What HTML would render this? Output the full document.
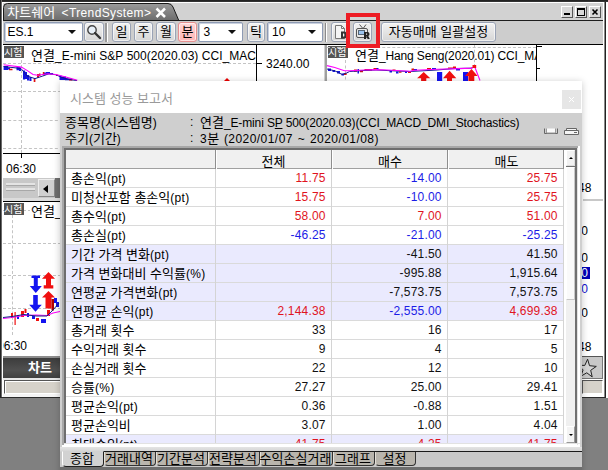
<!DOCTYPE html><html><head><meta charset="utf-8"><title>차트쉐어 TrendSystem</title><style>
html,body{margin:0;padding:0}
body{width:608px;height:470px;overflow:hidden;background:#808080;position:relative;font-family:"Liberation Sans","Noto Sans CJK KR",sans-serif;font-size:12px;color:#000}
.a{position:absolute}
.t{white-space:nowrap}
.k{font-size:13px;letter-spacing:normal}
.k2{font-size:10px;letter-spacing:normal}
</style></head><body><div class="a" style="left:0px;top:0px;width:608px;height:398px;background:#fff"></div>
<div class="a" style="left:0px;top:0px;width:608px;height:2px;background:linear-gradient(#1c1c1c,#3a3a3a)"></div>
<div class="a" style="left:0px;top:0px;width:1px;height:398px;background:#222"></div>
<div class="a" style="left:1px;top:0px;width:1px;height:398px;background:#6a6a6a"></div>
<div class="a" style="left:604px;top:2px;width:1px;height:396px;background:#8a8a8a"></div>
<div class="a" style="left:605px;top:2px;width:1px;height:396px;background:#222"></div>
<div class="a" style="left:0px;top:397px;width:606px;height:1px;background:#2a2a2a"></div>
<div class="a" style="left:3px;top:3px;width:600px;height:17px;background:#d2d2d2"></div>
<div class="a" style="left:3px;top:20px;width:600px;height:1px;background:#1e1e1e"></div>
<div class="a" style="left:3px;top:21px;width:600px;height:23px;background:#cdcdcd"></div>
<div class="a" style="left:3px;top:44px;width:600px;height:1px;background:#000"></div>
<svg class="a" style="left:2px;top:2px" width="180" height="19" viewBox="0 0 180 19">
<defs><linearGradient id="tg" x1="0" y1="0" x2="0" y2="1"><stop offset="0" stop-color="#9a9a9a"/><stop offset="1" stop-color="#6c6c6c"/></linearGradient></defs>
<path d="M1.5 18.5V5.5Q1.5 1.5 5.5 1.5H166Q169.5 1.5 171 5L176.8 18.5Z" fill="url(#tg)" stroke="#1a1a1a" stroke-width="1"/>
</svg>
<div class="a t" style="left:7.3px;top:5px;height:16px;line-height:16px;color:#fff"><span class="k">차트쉐어</span></div>
<div class="a t" style="left:61.5px;top:5px;height:16px;line-height:16px;color:#fff;letter-spacing:0.38px">&lt;TrendSystem&gt;</div>
<svg class="a" style="left:155px;top:7px" width="12" height="12" viewBox="0 0 12 12"><path d="M1.500 1.500L10 10M10 1.500L1.500 10" stroke="#fff" stroke-width="2.500" fill="none"/></svg>
<div class="a" style="left:561px;top:6px;width:12px;height:12px;background:#d8d8d8;border:1px solid;border-color:#fff #555 #555 #fff;box-sizing:border-box"><div class="a" style="left:2px;top:6px;width:6px;height:2px;background:#000"></div></div>
<div class="a" style="left:575px;top:6px;width:12px;height:12px;background:#d8d8d8;border:1px solid;border-color:#fff #555 #555 #fff;box-sizing:border-box"><div class="a" style="left:1px;top:1px;width:8px;height:8px;box-sizing:border-box;border:1px solid #000;border-top-width:2px"></div></div>
<div class="a" style="left:589px;top:6px;width:12px;height:12px;background:#d8d8d8;border:1px solid;border-color:#fff #555 #555 #fff;box-sizing:border-box"><svg class="a" style="left:1px;top:1px" width="8" height="8" viewBox="0 0 8 8"><path d="M1.500 1.500L6.500 6.500M6.500 1.500L1.500 6.500" stroke="#000" stroke-width="1.600"/></svg></div>
<div class="a" style="left:4px;top:22px;width:79px;height:20px;background:#fff;border:1px solid #8e9bb4;box-sizing:border-box;border-radius:2px;box-shadow:inset 1px 1px 0 #c9d0de"></div>
<div class="a t" style="left:7.5px;top:23px;height:18px;line-height:18px;">ES.1</div>
<div class="a" style="left:68px;top:30px;border:4px solid transparent;border-top:4px solid #111;border-bottom:0;width:0;height:0"></div>
<div class="a" style="left:84px;top:22px;width:20px;height:20px;background:linear-gradient(#f2f2f2,#d6d6d6);border:1px solid #9aa3b5;box-sizing:border-box;border-radius:3px;box-shadow:inset 0 0 0 1px rgba(255,255,255,.6)"></div>
<svg class="a" style="left:86px;top:24px" width="16" height="16" viewBox="0 0 16 16"><circle cx="6" cy="6" r="4.2" fill="#e8f0f8" stroke="#444" stroke-width="1.4"/><path d="M9 9L14 14" stroke="#333" stroke-width="2.4" stroke-linecap="round"/></svg>
<div class="a" style="left:105px;top:23px;width:2px;height:19px;background:#9a9a9a"></div>
<div class="a" style="left:107px;top:23px;width:1px;height:19px;background:#fff"></div>
<div class="a" style="left:112px;top:22px;width:19px;height:20px;background:linear-gradient(#f2f2f2,#d6d6d6);border:1px solid #9aa3b5;box-sizing:border-box;border-radius:3px;box-shadow:inset 0 0 0 1px rgba(255,255,255,.6)"></div>
<div class="a t" style="left:112px;top:23px;height:18px;line-height:18px;width:19px;text-align:center"><span class="k">일</span></div>
<div class="a" style="left:134px;top:22px;width:19px;height:20px;background:linear-gradient(#f2f2f2,#d6d6d6);border:1px solid #9aa3b5;box-sizing:border-box;border-radius:3px;box-shadow:inset 0 0 0 1px rgba(255,255,255,.6)"></div>
<div class="a t" style="left:134px;top:23px;height:18px;line-height:18px;width:19px;text-align:center"><span class="k">주</span></div>
<div class="a" style="left:156px;top:22px;width:20px;height:20px;background:linear-gradient(#f2f2f2,#d6d6d6);border:1px solid #9aa3b5;box-sizing:border-box;border-radius:3px;box-shadow:inset 0 0 0 1px rgba(255,255,255,.6)"></div>
<div class="a t" style="left:156px;top:23px;height:18px;line-height:18px;width:20px;text-align:center"><span class="k">월</span></div>
<div class="a" style="left:178px;top:22px;width:19px;height:20px;background:linear-gradient(#ffd6d6,#ffb4b4);border:1px solid #e58f8f;box-sizing:border-box;border-radius:3px;box-shadow:inset 0 0 0 1px rgba(255,255,255,.6)"></div>
<div class="a t" style="left:178px;top:23px;height:18px;line-height:18px;width:19px;text-align:center"><span class="k">분</span></div>
<div class="a" style="left:198px;top:22px;width:45px;height:20px;background:#fff;border:1px solid #8e9bb4;box-sizing:border-box;border-radius:2px;box-shadow:inset 1px 1px 0 #c9d0de"></div>
<div class="a t" style="left:203.5px;top:23px;height:18px;line-height:18px;">3</div>
<div class="a" style="left:228px;top:30px;border:4px solid transparent;border-top:4px solid #111;border-bottom:0;width:0;height:0"></div>
<div class="a" style="left:247px;top:22px;width:18px;height:20px;background:linear-gradient(#f2f2f2,#d6d6d6);border:1px solid #9aa3b5;box-sizing:border-box;border-radius:3px;box-shadow:inset 0 0 0 1px rgba(255,255,255,.6)"></div>
<div class="a t" style="left:247px;top:23px;height:18px;line-height:18px;width:18px;text-align:center"><span class="k">틱</span></div>
<div class="a" style="left:267px;top:22px;width:56px;height:20px;background:#fff;border:1px solid #8e9bb4;box-sizing:border-box;border-radius:2px;box-shadow:inset 1px 1px 0 #c9d0de"></div>
<div class="a t" style="left:272px;top:23px;height:18px;line-height:18px;">10</div>
<div class="a" style="left:308px;top:30px;border:4px solid transparent;border-top:4px solid #111;border-bottom:0;width:0;height:0"></div>
<div class="a" style="left:325px;top:23px;width:1px;height:19px;background:#8a8a8a"></div>
<div class="a" style="left:326px;top:23px;width:1px;height:19px;background:#fff"></div>
<div class="a" style="left:331px;top:22px;width:19px;height:20px;background:linear-gradient(#f2f2f2,#d6d6d6);border:1px solid #9aa3b5;box-sizing:border-box;border-radius:3px;box-shadow:inset 0 0 0 1px rgba(255,255,255,.6)"></div>
<div class="a" style="left:353px;top:22px;width:19px;height:20px;background:linear-gradient(#f2f2f2,#d6d6d6);border:1px solid #9aa3b5;box-sizing:border-box;border-radius:3px;box-shadow:inset 0 0 0 1px rgba(255,255,255,.6)"></div>
<svg class="a" style="left:333px;top:24px" width="16" height="16" viewBox="0 0 16 16">
<path d="M2.5 1.5H8.5L11.5 4.5V14.5H2.5Z" fill="#f4f4f4" stroke="#777" stroke-width="1"/><path d="M8.5 1.5V4.5H11.5" fill="none" stroke="#777"/>
<path d="M8 7.5H11Q14 7.5 14 11Q14 14.5 11 14.5H8Z M10 9.5V12.5H11Q12 12.5 12 11Q12 9.5 11 9.5Z" fill="#333" fill-rule="evenodd"/></svg>
<svg class="a" style="left:355px;top:24px" width="16" height="16" viewBox="0 0 16 16">
<path d="M4.5 0.5L7.5 4M11 0.5L8.5 4" stroke="#555" stroke-width="1" fill="none"/>
<rect x="1.5" y="4.5" width="11" height="9" rx="1.5" fill="#e8e8e8" stroke="#555"/>
<rect x="3.5" y="6.5" width="6" height="4" fill="#9cc4ee" stroke="#567"/>
<path d="M9 8H12.5Q14.5 8 14.5 10Q14.5 11.5 13.3 11.9L14.8 15H12.6L11.4 12.2H11V15H9Z M11 9.6V10.8H12Q12.6 10.8 12.6 10.2Q12.6 9.6 12 9.6Z" fill="#222" fill-rule="evenodd"/></svg>
<div class="a" style="left:381px;top:22px;width:115px;height:20px;background:linear-gradient(#f2f2f2,#d6d6d6);border:1px solid #9aa3b5;box-sizing:border-box;border-radius:3px;box-shadow:inset 0 0 0 1px rgba(255,255,255,.6)"></div>
<div class="a t" style="left:381px;top:23px;height:18px;line-height:18px;width:115px;text-align:center"><span class="k">자동매매 일괄설정</span></div>
<div class="a" style="left:3px;top:63px;width:253px;height:0px;border-top:1px dashed #c4c4c4"></div>
<div class="a" style="left:3px;top:91px;width:253px;height:0px;border-top:1px dashed #c4c4c4"></div>
<div class="a" style="left:21px;top:60px;width:0px;height:93px;border-left:1px dashed #c4c4c4"></div>
<div class="a" style="left:3px;top:148px;width:60px;height:0px;border-top:1px dashed #c4c4c4"></div>
<div class="a" style="left:3px;top:120px;width:60px;height:0px;border-top:1px dashed #c4c4c4"></div>
<div class="a" style="left:4px;top:46px;width:20px;height:12px;background:#555"></div>
<div class="a t" style="left:4px;top:46px;height:12px;line-height:12px;color:#fff"><span class="k2">시험</span></div>
<div class="a t" style="left:31px;top:47px;height:17px;line-height:17px;letter-spacing:0.03px;width:225px;overflow:hidden"><span class="k">연결</span>_E-mini&nbsp;S&amp;P&nbsp;500(2020.03)&nbsp;CCI_MAC</div>
<div class="a" style="left:256px;top:45px;width:1px;height:40px;background:#000"></div>
<div class="a" style="left:256px;top:63px;width:6px;height:1px;background:#000"></div>
<div class="a t" style="left:266px;top:56px;height:17px;line-height:17px;">3240.00</div>
<svg class="a" style="left:0;top:45px" width="100" height="50" viewBox="0 45 100 50" fill="none">
<g fill="#1414e0"><path d="M3.600 66h4.500v4h-4.500zM8 67.500h2v2h-2zM16.500 67h4v3.200h-4zM19 68h2v3h-2zM23 70.400h2.200v9h-2.200zM25 72h2v7h-2zM27 75h2.200v5.500h-2.200zM29.500 77h2v4h-2zM44 72.500h2v2.200h-2zM46 72h4v2.200h-4zM50 73h3v1.500h-3zM59.500 75.500h2v4.500h-2zM61.500 76.500h4.500v3.500h-4.500zM65 78.500h7v1.800h-7z"/></g>
<g fill="#e01010"><path d="M9 68.800h3.500v1.500h-3.500zM33.700 78.500h1.700v3.500h-1.700zM37 74h2v3.800h-2zM39 73.500h1.500v2.500h-1.500zM42.800 72h1.500v3.200h-1.500zM56 74.500h1.600v1.600h-1.600zM69 79h3.500v1.400h-3.500z"/></g>
<path d="M3.600 66.500L21 68.500L27 76L35 78.600L42.800 76L49 73.700L56 74.800L62 77.500L70 79.500L77 80.600" stroke="#101890" stroke-width="1"/>
<path d="M3.600 64.700L21.400 67.100L27 70.400L33 74.500L37.800 75.300L47.700 73.700L56 74.500L65.800 77L77.300 80.300" stroke="#f0f" stroke-width="1.100"/>
</svg>
<div class="a" style="left:227px;top:78px;width:0px;height:0px;border:3px solid transparent;border-bottom:3px solid #e00;border-top:0;left:224px"></div>
<div class="a" style="left:3px;top:153px;width:58px;height:1px;background:#000"></div>
<div class="a" style="left:21px;top:153px;width:1px;height:5px;background:#000"></div>
<div class="a t" style="left:6px;top:161px;height:16px;line-height:16px;">06:30</div>
<div class="a" style="left:3px;top:178px;width:58px;height:20px;background:#c8c8c8"></div>
<div class="a" style="left:6px;top:183px;width:29px;height:2px;background:#e4e4e4;border-bottom:1px solid #a8a8a8"></div>
<div class="a" style="left:6px;top:188px;width:29px;height:2px;background:#e4e4e4;border-bottom:1px solid #a8a8a8"></div>
<div class="a" style="left:38px;top:179px;width:17px;height:18px;background:#d0d0d0;border:1px solid;border-color:#eee #888 #888 #eee;box-sizing:border-box"></div>
<div class="a" style="left:43px;top:185px;border:4px solid transparent;border-right:5px solid #000;border-left:0"></div>
<div class="a" style="left:55px;top:178px;width:6px;height:20px;background:#6e6e6e"></div>
<div class="a" style="left:3px;top:198px;width:58px;height:3px;background:#dcdcdc"></div>
<div class="a" style="left:3px;top:201px;width:58px;height:1px;background:#000"></div>
<div class="a" style="left:12px;top:215px;width:0px;height:120px;border-left:1px dashed #c4c4c4"></div>
<div class="a" style="left:3px;top:210px;width:58px;height:0px;border-top:1px dashed #c4c4c4"></div>
<div class="a" style="left:3px;top:243px;width:58px;height:0px;border-top:1px dashed #c4c4c4"></div>
<div class="a" style="left:3px;top:275px;width:58px;height:0px;border-top:1px dashed #c4c4c4"></div>
<div class="a" style="left:3px;top:308px;width:58px;height:0px;border-top:1px dashed #c4c4c4"></div>
<div class="a" style="left:4px;top:203px;width:20px;height:12px;background:#555"></div>
<div class="a t" style="left:4px;top:203px;height:12px;line-height:12px;color:#fff"><span class="k2">시험</span></div>
<div class="a" style="left:30px;top:204px;width:31px;height:14px;background:#fff"></div>
<div class="a t" style="left:31px;top:203px;height:17px;line-height:17px;"><span class="k">연결</span>_</div>
<svg class="a" style="left:0;top:265px" width="62" height="70" viewBox="0 265 62 70">
<g fill="#1414f0"><path d="M31.5 275.5h8.5v2.5h-2.200v8h4l-6 7l-6 -7h4v-8h-2.300z"/><path d="M33.200 295h4.600v9.700h4l-6.300 7l-6.300 -7h4z"/>
<path d="M54 298h3v4h2v5h-3v-4h-2z"/><path d="M41 319h5v4h-5z"/><path d="M27 313h2v4h-2zM32 316h3v3h-3zM17 315h2v4h-2z"/></g>
<g fill="#f01010"><path d="M48.500 272l6.500 6.700h-4v6.600h2.300v3.300h-9.600v-3.300h2.300v-6.600h-4z"/><path d="M48.500 291l6.500 6.500h-3.500v11h-6v-11h-3.500z"/>
<path d="M11 313h2v5h-2zM14.500 312h1.200v13h-1.200zM21 311h3v6h-3zM24.500 309h2v4h-2zM36 318h3v3h-3zM47 310h3v6h-3z"/></g>
<path d="M51.500 299h2.500v11.500h-2.500z" fill="#b00000"/>
<path d="M3 318.500L12 317.500L24 315.500L36 315L47 315.500L53 313L60 311.500" stroke="#f0f" stroke-width="1.100" fill="none"/>
<path d="M3 317.500L12 316.500L24 314.500L36 316L47 316L53 310L59 303" stroke="#102080" stroke-width="1" fill="none"/>
</svg>
<div class="a" style="left:3px;top:338px;width:40px;height:16px;overflow:hidden"><div class="a t" style="left:-6px;top:0;line-height:16px">06:30</div></div>
<div class="a" style="left:3px;top:356px;width:58px;height:2px;background:#8c8c8c"></div>
<div class="a" style="left:3px;top:358px;width:58px;height:20px;background:linear-gradient(#3c3c3c,#505050 60%,#404040)"></div>
<div class="a t" style="left:28px;top:360px;height:16px;line-height:16px;color:#fff"><span class="k" style="font-weight:bold">차트</span></div>
<div class="a" style="left:3px;top:378px;width:58px;height:2px;background:#e8e8e8"></div>
<div class="a" style="left:4px;top:380px;width:57px;height:14px;background:#d6d2ca;border:1px solid;border-color:#555 #fff #fff #555;box-sizing:border-box;box-shadow:inset 1px 1px 0 #fff"></div>
<div class="a" style="left:3px;top:394px;width:58px;height:3px;background:#f4f4f4"></div>
<div class="a" style="left:324px;top:45px;width:1px;height:40px;background:#d0d0d0"></div>
<div class="a" style="left:325px;top:45px;width:2px;height:40px;background:#a0a0a0"></div>
<div class="a" style="left:328px;top:46px;width:20px;height:12px;background:#555"></div>
<div class="a t" style="left:328px;top:46px;height:12px;line-height:12px;color:#fff"><span class="k2">시험</span></div>
<div class="a t" style="left:355px;top:47px;height:17px;line-height:17px;width:181px;overflow:hidden;white-space:nowrap;letter-spacing:-0.14px"><span class="k">연결</span>_Hang&nbsp;Seng(2020.01)&nbsp;CCI_MA</div>
<div class="a" style="left:536px;top:45px;width:1px;height:40px;background:#000"></div>
<div class="a" style="left:536px;top:46px;width:6px;height:1px;background:#000"></div>
<div class="a" style="left:536px;top:68px;width:4px;height:1px;background:#000"></div>
<div class="a" style="left:345px;top:60px;width:0px;height:25px;border-left:1px dashed #c4c4c4"></div>
<div class="a" style="left:474px;top:45px;width:0px;height:22px;border-left:1px dashed #c4c4c4"></div>
<div class="a" style="left:327px;top:47px;width:209px;height:0px;border-top:1px dashed #c4c4c4"></div>
<svg class="a" style="left:325px;top:58px" width="165" height="23" viewBox="325 58 165 23" fill="none">
<g fill="#1414e0"><path d="M328 68.500h3v2.500h-3zM332.500 70h2.500v2h-2.500zM337 71h3v2.500h-3zM341.500 73.500h2.500v2h-2.500zM357.500 69h1.500v4.500h-1.500zM376 68h2.500v1.500h-2.500zM389.500 70h2.500v2.500h-2.500zM396 71.500h2.500v2h-2.500zM405 71h2v2h-2zM414 69h3v1.500h-3zM432 68h4v1.500h-4zM456 69h4v1.500h-4z"/></g>
<g fill="#e01010"><path d="M344 73h2.600v2h-2.600zM354 69.500h3v2.200h-3zM360 70h3v2.300h-3zM364.500 69h7.500v1.800h-7.500zM373.500 68h3v1.500h-3zM392.500 69.600h3v1.500h-3zM399 71.500h2.500v1.200h-2.500zM408 71.500h3v1.500h-3zM411.500 68.500h2.500v2h-2.500zM427 68h4v1.500h-4zM448 67.500h5v1.300h-5zM453 66.500h3v1.500h-3z"/></g>
<path d="M327 69L334.800 70.800L342.200 74.500L346.600 73L349.600 71.500L364 70.500L376 70L397 71L410 71.500L437 70L455 68.500L471 68.200L474.500 67" stroke="#101890" stroke-width="1"/>
<path d="M327 65.600L334.800 67.500L344.400 70.800L349.600 70.800L364.400 70L376.300 69.600L386.600 70L397 70.500L410 71.300L414.800 70.200L437 69.300L459.200 68.600L471 68.100L474.800 67L480 80.500" stroke="#f0f" stroke-width="1.100"/>
<g fill="#1414f0"><path d="M437 72h5.200v9h-5.200z"/><path d="M463 72h5v9h-5z"/></g>
<g fill="#f01010"><path d="M423.700 72l6.600 6.200h-4v2.800h-5.200v-2.800h-4z"/><path d="M449.600 70.800l6.700 7.400h-4.300v2.800h-5v-2.800h-4z"/><path d="M471.500 69l6.200 7h-3.400v5h-5.900v-5h-3.400z"/><path d="M472.500 65h3.700v3h-3.700z"/></g>
</svg>
<div class="a t" style="left:578px;top:180px;height:16px;line-height:16px;">48</div>
<div class="a" style="left:583px;top:199px;width:20px;height:2px;background:#c8c8c8"></div>
<div class="a t" style="left:581.3px;top:223px;height:16px;line-height:16px;">0</div>
<div class="a t" style="left:581.3px;top:250px;height:16px;line-height:16px;">0</div>
<div class="a" style="left:582px;top:267px;width:8px;height:12px;background:#0000b8"></div>
<div class="a t" style="left:581.3px;top:265px;height:16px;line-height:16px;color:#fff">0</div>
<div class="a t" style="left:581.3px;top:281px;height:16px;line-height:16px;color:#1414d0">0</div>
<div class="a t" style="left:581.3px;top:305px;height:16px;line-height:16px;">0</div>
<div class="a t" style="left:578px;top:339px;height:16px;line-height:16px;">48</div>
<div class="a" style="left:575px;top:356px;width:28px;height:23px;background:#c8c8c8;border:1px solid;border-color:#555 #777 #777 #eee;box-sizing:border-box"></div>
<svg class="a" style="left:570px;top:355px" width="34" height="26" viewBox="0 0 34 26"><path d="M17.6 4.2L19.5 10.700L26.300 11.400L20.700 15.300L22.200 21.900L16.800 17.800L10.900 21.200L13.100 14.800L8.100 10.300L14.800 10.400Z" fill="#d4d4d4" stroke="#222" stroke-width="1"/></svg>
<div class="a" style="left:582px;top:380px;width:21px;height:14px;background:#d6d2ca;border:1px solid;border-color:#555 #fff #fff #555;box-sizing:border-box"></div>
<div class="a" style="left:346px;top:13px;width:34px;height:35px;border:4.5px solid #ed1c24;box-sizing:border-box"></div>
<div class="a" style="left:60px;top:81px;width:522px;height:400px;background:#cfcfcf;box-shadow:0 1px 7px rgba(0,0,0,.22)"></div>
<div class="a" style="left:60px;top:81px;width:522px;height:32px;background:#fff"></div>
<div class="a t" style="left:70px;top:89.5px;height:17px;line-height:17px;color:#9a9a9a"><span class="k">시스템 성능 보고서</span></div>
<div class="a" style="left:562px;top:90px;width:19px;height:19px;background:#e6e6e6"></div>
<svg class="a" style="left:567px;top:95px" width="9" height="9" viewBox="0 0 9 9"><path d="M2 2L7 7M7 2L2 7" stroke="#fff" stroke-width="1"/></svg>
<div class="a t" style="left:65px;top:113.5px;height:17px;line-height:17px;"><span class="k">종목명</span>(<span class="k">시스템명</span>)</div>
<div class="a t" style="left:190px;top:113.5px;height:17px;line-height:17px;">:</div>
<div class="a t" style="left:200px;top:113.5px;height:17px;line-height:17px;letter-spacing:-0.13px"><span class="k">연결</span>_E-mini&nbsp;S<u>P</u> 500(2020.03)(CCI_MACD_DMI_Stochastics)</div>
<div class="a t" style="left:65px;top:130px;height:17px;line-height:17px;"><span class="k">주기</span>(<span class="k">기간</span>)</div>
<div class="a t" style="left:190px;top:130px;height:17px;line-height:17px;">:</div>
<div class="a t" style="left:200px;top:130px;height:17px;line-height:17px;letter-spacing:0.45px;word-spacing:1px">3<span class="k">분</span> (2020/01/07 ~ 2020/01/08)</div>
<svg class="a" style="left:543px;top:126px" width="38" height="11" viewBox="0 0 38 11" fill="#f4f4f4" stroke="#666" stroke-width="1">
<path d="M1.500 2.500V7.500H14.500V2.500" fill="none"/><path d="M3.500 2.500V7H12.500V2.500" fill="#fafafa" stroke="#999"/><path d="M21.500 4.500H35.500V8.500H21.500ZM23.500 4.500V2.500H33.500V4.500"/><path d="M31 6.500h3" /></svg>
<div class="a" style="left:62px;top:146px;width:518px;height:301px;background:#fff"></div>
<div class="a" style="left:62px;top:146px;width:516px;height:2px;background:#a8a8a8"></div>
<div class="a" style="left:62px;top:146px;width:2px;height:299px;background:#a8a8a8"></div>
<div class="a" style="left:64px;top:148px;width:513px;height:2px;background:#6e6e6e"></div>
<div class="a" style="left:64px;top:148px;width:2px;height:296px;background:#6e6e6e"></div>
<div class="a" style="left:577px;top:148px;width:1px;height:297px;background:#e2e2e2"></div>
<div class="a" style="left:64px;top:443px;width:516px;height:1px;background:#e2e2e2"></div>
<div class="a" style="left:66px;top:150px;width:498px;height:18px;background:#f0f0f0"></div>
<div class="a" style="left:66px;top:168px;width:498px;height:1px;background:#a0a0a0"></div>
<div class="a" style="left:215px;top:150px;width:1px;height:19px;background:#8e8e8e"></div>
<div class="a" style="left:216px;top:150px;width:1px;height:19px;background:#fff"></div>
<div class="a" style="left:331px;top:150px;width:1px;height:19px;background:#8e8e8e"></div>
<div class="a" style="left:332px;top:150px;width:1px;height:19px;background:#fff"></div>
<div class="a" style="left:447px;top:150px;width:1px;height:19px;background:#8e8e8e"></div>
<div class="a" style="left:448px;top:150px;width:1px;height:19px;background:#fff"></div>
<div class="a" style="left:563px;top:150px;width:1px;height:19px;background:#8e8e8e"></div>
<div class="a" style="left:564px;top:150px;width:1px;height:19px;background:#fff"></div>
<div class="a t" style="left:243.5px;top:153px;height:17px;line-height:17px;width:60px;text-align:center"><span class="k">전체</span></div>
<div class="a t" style="left:360px;top:153px;height:17px;line-height:17px;width:60px;text-align:center"><span class="k">매수</span></div>
<div class="a t" style="left:476.5px;top:153px;height:17px;line-height:17px;width:60px;text-align:center"><span class="k">매도</span></div>
<div class="a" style="left:66px;top:169px;width:499px;height:274px;overflow:hidden">
<div class="a" style="left:0;top:0px;width:497px;height:18px;background:#fff;border-bottom:1px solid #dadada"></div>
<div class="a t" style="left:5px;top:0px;height:18px;line-height:20px;letter-spacing:0.3px"><span class="k">총손익</span>(pt)</div>
<div class="a t" style="right:239.3px;top:0px;height:18px;line-height:19px;letter-spacing:0.2px;color:#e0141e">11.75</div>
<div class="a t" style="right:123.3px;top:0px;height:18px;line-height:19px;letter-spacing:0.2px;color:#1c1ce6">-14.00</div>
<div class="a t" style="right:7.3px;top:0px;height:18px;line-height:19px;letter-spacing:0.2px;color:#e0141e">25.75</div>
<div class="a" style="left:0;top:19px;width:497px;height:18px;background:#fff;border-bottom:1px solid #dadada"></div>
<div class="a t" style="left:5px;top:19px;height:18px;line-height:20px;letter-spacing:0.3px"><span class="k">미청산포함 총손익</span>(pt)</div>
<div class="a t" style="right:239.3px;top:19px;height:18px;line-height:19px;letter-spacing:0.2px;color:#e0141e">15.75</div>
<div class="a t" style="right:123.3px;top:19px;height:18px;line-height:19px;letter-spacing:0.2px;color:#1c1ce6">-10.00</div>
<div class="a t" style="right:7.3px;top:19px;height:18px;line-height:19px;letter-spacing:0.2px;color:#e0141e">25.75</div>
<div class="a" style="left:0;top:38px;width:497px;height:18px;background:#fff;border-bottom:1px solid #dadada"></div>
<div class="a t" style="left:5px;top:38px;height:18px;line-height:20px;letter-spacing:0.3px"><span class="k">총수익</span>(pt)</div>
<div class="a t" style="right:239.3px;top:38px;height:18px;line-height:19px;letter-spacing:0.2px;color:#e0141e">58.00</div>
<div class="a t" style="right:123.3px;top:38px;height:18px;line-height:19px;letter-spacing:0.2px;color:#e0141e">7.00</div>
<div class="a t" style="right:7.3px;top:38px;height:18px;line-height:19px;letter-spacing:0.2px;color:#e0141e">51.00</div>
<div class="a" style="left:0;top:57px;width:497px;height:18px;background:#fff;border-bottom:1px solid #dadada"></div>
<div class="a t" style="left:5px;top:57px;height:18px;line-height:20px;letter-spacing:0.3px"><span class="k">총손실</span>(pt)</div>
<div class="a t" style="right:239.3px;top:57px;height:18px;line-height:19px;letter-spacing:0.2px;color:#1c1ce6">-46.25</div>
<div class="a t" style="right:123.3px;top:57px;height:18px;line-height:19px;letter-spacing:0.2px;color:#1c1ce6">-21.00</div>
<div class="a t" style="right:7.3px;top:57px;height:18px;line-height:19px;letter-spacing:0.2px;color:#1c1ce6">-25.25</div>
<div class="a" style="left:0;top:76px;width:497px;height:18px;background:#eaeafe;border-bottom:1px solid #dadada"></div>
<div class="a t" style="left:5px;top:76px;height:18px;line-height:20px;letter-spacing:0.3px"><span class="k">기간 가격 변화</span>(pt)</div>
<div class="a t" style="right:123.3px;top:76px;height:18px;line-height:19px;letter-spacing:0.2px;color:#111">-41.50</div>
<div class="a t" style="right:7.3px;top:76px;height:18px;line-height:19px;letter-spacing:0.2px;color:#111">41.50</div>
<div class="a" style="left:0;top:95px;width:497px;height:18px;background:#eaeafe;border-bottom:1px solid #dadada"></div>
<div class="a t" style="left:5px;top:95px;height:18px;line-height:20px;letter-spacing:0.3px"><span class="k">가격 변화대비 수익률</span>(%)</div>
<div class="a t" style="right:123.3px;top:95px;height:18px;line-height:19px;letter-spacing:0.2px;color:#111">-995.88</div>
<div class="a t" style="right:7.3px;top:95px;height:18px;line-height:19px;letter-spacing:0.2px;color:#111">1,915.64</div>
<div class="a" style="left:0;top:114px;width:497px;height:18px;background:#eaeafe;border-bottom:1px solid #dadada"></div>
<div class="a t" style="left:5px;top:114px;height:18px;line-height:20px;letter-spacing:0.3px"><span class="k">연평균 가격변화</span>(pt)</div>
<div class="a t" style="right:123.3px;top:114px;height:18px;line-height:19px;letter-spacing:0.2px;color:#111">-7,573.75</div>
<div class="a t" style="right:7.3px;top:114px;height:18px;line-height:19px;letter-spacing:0.2px;color:#111">7,573.75</div>
<div class="a" style="left:0;top:133px;width:497px;height:18px;background:#eaeafe;border-bottom:1px solid #dadada"></div>
<div class="a t" style="left:5px;top:133px;height:18px;line-height:20px;letter-spacing:0.3px"><span class="k">연평균 손익</span>(pt)</div>
<div class="a t" style="right:239.3px;top:133px;height:18px;line-height:19px;letter-spacing:0.2px;color:#e0141e">2,144.38</div>
<div class="a t" style="right:123.3px;top:133px;height:18px;line-height:19px;letter-spacing:0.2px;color:#1c1ce6">-2,555.00</div>
<div class="a t" style="right:7.3px;top:133px;height:18px;line-height:19px;letter-spacing:0.2px;color:#e0141e">4,699.38</div>
<div class="a" style="left:0;top:152px;width:497px;height:18px;background:#fff;border-bottom:1px solid #dadada"></div>
<div class="a t" style="left:5px;top:152px;height:18px;line-height:20px;letter-spacing:0.3px"><span class="k">총거래 횟수</span></div>
<div class="a t" style="right:239.3px;top:152px;height:18px;line-height:19px;letter-spacing:0.2px;color:#111">33</div>
<div class="a t" style="right:123.3px;top:152px;height:18px;line-height:19px;letter-spacing:0.2px;color:#111">16</div>
<div class="a t" style="right:7.3px;top:152px;height:18px;line-height:19px;letter-spacing:0.2px;color:#111">17</div>
<div class="a" style="left:0;top:171px;width:497px;height:18px;background:#fff;border-bottom:1px solid #dadada"></div>
<div class="a t" style="left:5px;top:171px;height:18px;line-height:20px;letter-spacing:0.3px"><span class="k">수익거래 횟수</span></div>
<div class="a t" style="right:239.3px;top:171px;height:18px;line-height:19px;letter-spacing:0.2px;color:#111">9</div>
<div class="a t" style="right:123.3px;top:171px;height:18px;line-height:19px;letter-spacing:0.2px;color:#111">4</div>
<div class="a t" style="right:7.3px;top:171px;height:18px;line-height:19px;letter-spacing:0.2px;color:#111">5</div>
<div class="a" style="left:0;top:190px;width:497px;height:18px;background:#fff;border-bottom:1px solid #dadada"></div>
<div class="a t" style="left:5px;top:190px;height:18px;line-height:20px;letter-spacing:0.3px"><span class="k">손실거래 횟수</span></div>
<div class="a t" style="right:239.3px;top:190px;height:18px;line-height:19px;letter-spacing:0.2px;color:#111">22</div>
<div class="a t" style="right:123.3px;top:190px;height:18px;line-height:19px;letter-spacing:0.2px;color:#111">12</div>
<div class="a t" style="right:7.3px;top:190px;height:18px;line-height:19px;letter-spacing:0.2px;color:#111">10</div>
<div class="a" style="left:0;top:209px;width:497px;height:18px;background:#fff;border-bottom:1px solid #dadada"></div>
<div class="a t" style="left:5px;top:209px;height:18px;line-height:20px;letter-spacing:0.3px"><span class="k">승률</span>(%)</div>
<div class="a t" style="right:239.3px;top:209px;height:18px;line-height:19px;letter-spacing:0.2px;color:#111">27.27</div>
<div class="a t" style="right:123.3px;top:209px;height:18px;line-height:19px;letter-spacing:0.2px;color:#111">25.00</div>
<div class="a t" style="right:7.3px;top:209px;height:18px;line-height:19px;letter-spacing:0.2px;color:#111">29.41</div>
<div class="a" style="left:0;top:228px;width:497px;height:18px;background:#fff;border-bottom:1px solid #dadada"></div>
<div class="a t" style="left:5px;top:228px;height:18px;line-height:20px;letter-spacing:0.3px"><span class="k">평균손익</span>(pt)</div>
<div class="a t" style="right:239.3px;top:228px;height:18px;line-height:19px;letter-spacing:0.2px;color:#111">0.36</div>
<div class="a t" style="right:123.3px;top:228px;height:18px;line-height:19px;letter-spacing:0.2px;color:#111">-0.88</div>
<div class="a t" style="right:7.3px;top:228px;height:18px;line-height:19px;letter-spacing:0.2px;color:#111">1.51</div>
<div class="a" style="left:0;top:247px;width:497px;height:18px;background:#fff;border-bottom:1px solid #dadada"></div>
<div class="a t" style="left:5px;top:247px;height:18px;line-height:20px;letter-spacing:0.3px"><span class="k">평균손익비</span></div>
<div class="a t" style="right:239.3px;top:247px;height:18px;line-height:19px;letter-spacing:0.2px;color:#111">3.07</div>
<div class="a t" style="right:123.3px;top:247px;height:18px;line-height:19px;letter-spacing:0.2px;color:#111">1.00</div>
<div class="a t" style="right:7.3px;top:247px;height:18px;line-height:19px;letter-spacing:0.2px;color:#111">4.04</div>
<div class="a" style="left:0;top:266px;width:497px;height:18px;background:#eaeafe;border-bottom:1px solid #dadada"></div>
<div class="a t" style="left:5px;top:266px;height:18px;line-height:20px;letter-spacing:0.3px"><span class="k">최대수익</span>(pt)</div>
<div class="a t" style="right:239.3px;top:266px;height:18px;line-height:19px;letter-spacing:0.2px;color:#e0141e">41.75</div>
<div class="a t" style="right:123.3px;top:266px;height:18px;line-height:19px;letter-spacing:0.2px;color:#e0141e">4.25</div>
<div class="a t" style="right:7.3px;top:266px;height:18px;line-height:19px;letter-spacing:0.2px;color:#e0141e">41.75</div>
<div class="a" style="left:149px;top:0;width:1px;height:274px;background:#d4d4d4"></div>
<div class="a" style="left:265px;top:0;width:1px;height:274px;background:#d4d4d4"></div>
<div class="a" style="left:381px;top:0;width:1px;height:274px;background:#d4d4d4"></div>
<div class="a" style="left:497px;top:0;width:1px;height:274px;background:#d4d4d4"></div>
</div>
<div class="a" style="left:566px;top:150px;width:9px;height:16px;background:#f2f2f2;border:1px solid;border-color:#fff #ddd #ddd #fff;box-sizing:border-box"></div>
<div class="a" style="left:566px;top:166px;width:11px;height:1px;background:#707070"></div>
<div class="a" style="left:575px;top:150px;width:2px;height:293px;background:#707070"></div>
<div class="a" style="left:568.500px;top:156.500px;border:2px solid transparent;border-bottom:2.500px solid #000;border-top:0"></div>
<div class="a" style="left:566px;top:167px;width:9px;height:133px;background:#fafafa;border:1px solid;border-color:#fff #c8c8c8 #c8c8c8 #fff;box-sizing:border-box"></div>
<div class="a" style="left:566px;top:300px;width:9px;height:126px;background:#f0f0f0"></div>
<div class="a" style="left:566px;top:426px;width:9px;height:17px;background:#f4f4f4;border:1px solid;border-color:#fff #999 #999 #fff;box-sizing:border-box"></div>
<div class="a" style="left:568.500px;top:433.500px;border:2px solid transparent;border-top:2.500px solid #000;border-bottom:0"></div>
<div class="a" style="left:60px;top:447px;width:522px;height:4px;background:linear-gradient(#e4e4e4,#d6d6d6)"></div>
<div class="a" style="left:104px;top:451px;width:478px;height:1px;background:#1a1a1a"></div>
<div class="a" style="left:60px;top:452px;width:522px;height:15px;background:#c8c8c8"></div>
<div class="a" style="left:60px;top:467px;width:522px;height:3px;background:#6e6e6e"></div>
<div class="a" style="left:104px;top:452px;width:52px;height:14px;background:#b9b5ad;border:1px solid #333;border-top:0;border-left:1px solid #e4e0d8;border-radius:0 0 4px 4px;box-sizing:border-box"></div>
<div class="a t" style="left:103px;top:452px;height:13px;line-height:13px;width:52px;text-align:center"><span class="k">거래내역</span></div>
<div class="a" style="left:156px;top:452px;width:52px;height:14px;background:#b9b5ad;border:1px solid #333;border-top:0;border-left:1px solid #e4e0d8;border-radius:0 0 4px 4px;box-sizing:border-box"></div>
<div class="a t" style="left:155px;top:452px;height:13px;line-height:13px;width:52px;text-align:center"><span class="k">기간분석</span></div>
<div class="a" style="left:208px;top:452px;width:52px;height:14px;background:#b9b5ad;border:1px solid #333;border-top:0;border-left:1px solid #e4e0d8;border-radius:0 0 4px 4px;box-sizing:border-box"></div>
<div class="a t" style="left:207px;top:452px;height:13px;line-height:13px;width:52px;text-align:center"><span class="k">전략분석</span></div>
<div class="a" style="left:260px;top:452px;width:73px;height:14px;background:#b9b5ad;border:1px solid #333;border-top:0;border-left:1px solid #e4e0d8;border-radius:0 0 4px 4px;box-sizing:border-box"></div>
<div class="a t" style="left:259px;top:452px;height:13px;line-height:13px;width:73px;text-align:center"><span class="k">수익손실거래</span></div>
<div class="a" style="left:333px;top:452px;width:42px;height:14px;background:#b9b5ad;border:1px solid #333;border-top:0;border-left:1px solid #e4e0d8;border-radius:0 0 4px 4px;box-sizing:border-box"></div>
<div class="a t" style="left:332px;top:452px;height:13px;line-height:13px;width:42px;text-align:center"><span class="k">그래프</span></div>
<div class="a" style="left:375px;top:452px;width:41px;height:14px;background:#b9b5ad;border:1px solid #333;border-top:0;border-left:1px solid #e4e0d8;border-radius:0 0 4px 4px;box-sizing:border-box"></div>
<div class="a t" style="left:374px;top:452px;height:13px;line-height:13px;width:41px;text-align:center"><span class="k">설정</span></div>
<div class="a" style="left:62px;top:451px;width:42px;height:16px;background:#d2d2d2;border:1px solid;border-color:#d2d2d2 #222 #222 #fff;border-radius:0 0 4px 4px;box-sizing:border-box"></div>
<div class="a t" style="left:61px;top:452px;height:14px;line-height:14px;width:42px;text-align:center"><span class="k">종합</span></div></body></html>
